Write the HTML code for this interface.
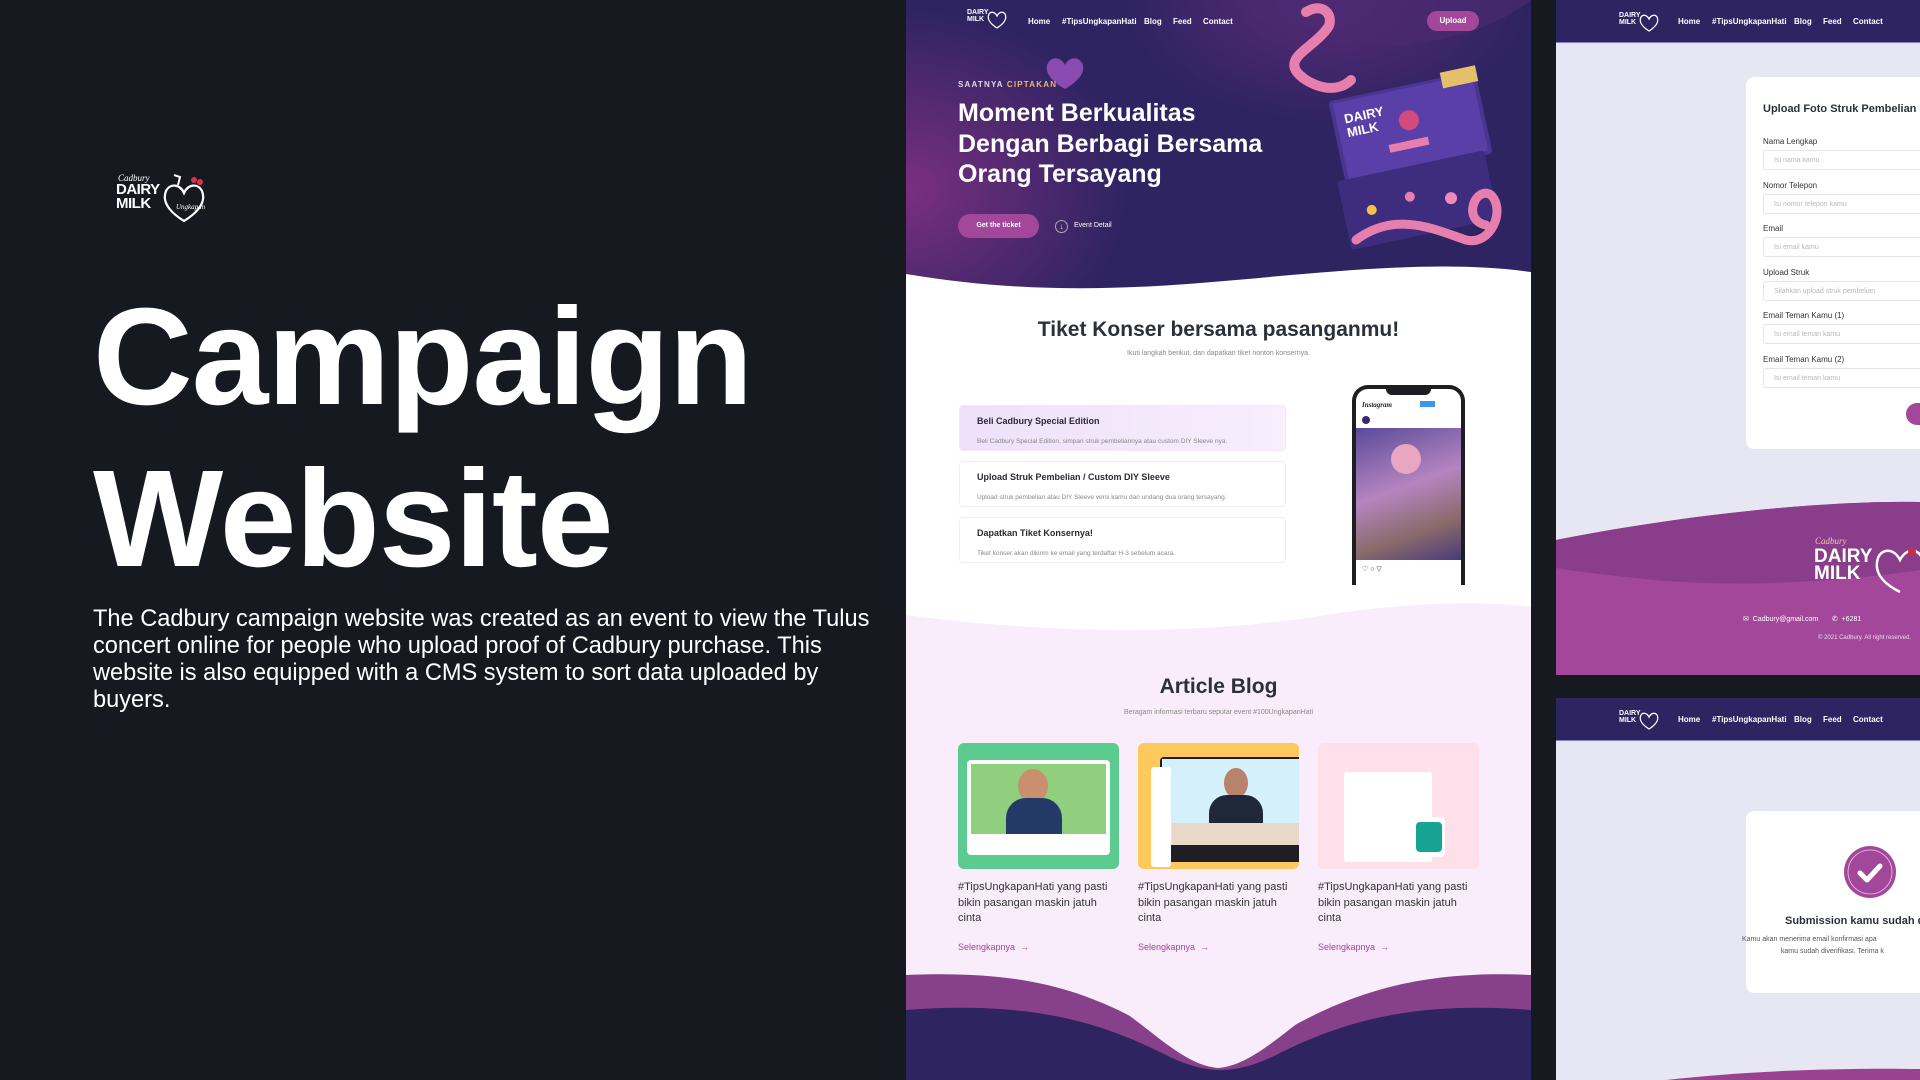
<!DOCTYPE html>
<html><head><meta charset="utf-8"><style>
*{margin:0;padding:0;box-sizing:border-box}
body{width:1920px;height:1080px;background:#161920;position:relative;overflow:hidden;font-family:"Liberation Sans",sans-serif}
.abs{position:absolute}
.nav a{position:absolute;color:#fff;font-size:8px;font-weight:bold;top:17px;white-space:nowrap}
.lbl{position:absolute;left:207px;font-size:8px;color:#333}
.inp{position:absolute;left:207px;width:200px;height:20px;border:1px solid #e4e4ea;border-radius:3px;font-size:7px;color:#b8b8c0;padding:6px 10px}
.step{position:absolute;left:53px;width:327px;height:46px;border:1px solid #eee;border-radius:4px;background:#fff;padding:10px 17px}
.step b{display:block;font-size:9px;color:#2a2a35;margin-bottom:4px}
.step span{font-size:6.5px;color:#888}
.card{position:absolute;top:743px;width:161px;height:126px;border-radius:6px;overflow:hidden}
.ct{position:absolute;top:880px;font-size:11px;line-height:15.5px;color:#333;width:165px}
.more{position:absolute;top:942px;font-size:9px;color:#a3479a}
</style></head><body>

<!-- LEFT -->
<div class="abs" style="left:116px;top:171px;width:92px;height:54px">
 <div class="abs" style="left:2px;top:2px;font:italic 9px 'Liberation Serif',serif;color:#fff">Cadbury</div>
 <div class="abs" style="left:0;top:12px;font:900 15px/14px 'Liberation Sans',sans-serif;color:#fff;letter-spacing:-0.5px">DAIRY<br>MILK</div>
 <svg class="abs" style="left:44px;top:0" width="48" height="54" viewBox="0 0 48 54"><path d="M24 50 C8 40 2 30 6 20 C10 12 20 13 24 22 C28 13 38 12 42 20 C46 30 40 40 24 50Z" fill="none" stroke="#fff" stroke-width="2.2"/><path d="M14 4 l6 2 -2 8" stroke="#fff" stroke-width="2" fill="none"/><circle cx="34" cy="9" r="3" fill="#e0304a"/><circle cx="40" cy="11" r="3" fill="#e0304a"/><text x="16" y="38" font-size="7" fill="#fff" font-style="italic" font-family="Liberation Serif">Ungkapan</text></svg>
</div>
<div class="abs" style="left:93px;top:276px;font-weight:bold;font-size:138px;line-height:162px;color:#fff;letter-spacing:-1px">Campaign<br>Website</div>
<div class="abs" style="left:93px;top:606px;font-size:23.6px;line-height:27px;color:#fff;width:900px">The Cadbury campaign website was created as an event to view the Tulus<br>concert online for people who upload proof of Cadbury purchase. This<br>website is also equipped with a CMS system to sort data uploaded by<br>buyers.</div>

<!-- MIDDLE -->
<div class="abs" style="left:906px;top:0;width:625px;height:1080px;background:#fff;overflow:hidden">
 <div class="abs" style="left:0;top:0;width:625px;height:300px;background:radial-gradient(ellipse 220px 180px at 0px 190px,#7a2f80 0%,rgba(122,47,128,0) 100%),radial-gradient(ellipse 200px 120px at 420px 0px,#5a2a77 0%,rgba(90,42,119,0) 100%),#2f2462"></div>
 <svg class="abs" style="left:0;top:250px" width="625" height="60"><path d="M0 24 C120 44 220 40 330 30 C440 20 540 10 625 22 L625 60 L0 60Z" fill="#fff"/></svg>
 <div class="abs" style="left:0;top:300px;width:625px;height:320px;background:#fff"></div>
 <!-- hero deco -->
 <svg class="abs" style="left:330px;top:0" width="295" height="270" viewBox="0 0 295 270">
  <path d="M0 0 C20 30 90 55 170 45 C230 38 270 20 295 0Z" fill="#4a2a70" opacity=".7"/>
  <path d="M70 12 C90 0 100 20 90 30 C75 50 40 60 70 80 C95 95 110 85 115 80" fill="none" stroke="#e77fae" stroke-width="10" stroke-linecap="round"/>
  <g transform="rotate(-12 175 130)"><rect x="100" y="85" width="150" height="85" rx="4" fill="#4b3593"/><rect x="104" y="88" width="142" height="78" fill="#5a3fa8"/><rect x="92" y="165" width="150" height="70" rx="3" fill="#3e2c7e"/>
  <text x="112" y="110" font-size="13" font-weight="900" fill="#fff" font-family="Liberation Sans">DAIRY</text><text x="112" y="124" font-size="13" font-weight="900" fill="#fff" font-family="Liberation Sans">MILK</text>
  <rect x="215" y="80" width="36" height="16" fill="#e4c06a"/><circle cx="175" cy="120" r="10" fill="#d54a7c"/><rect x="150" y="140" width="40" height="8" fill="#e77fae"/><circle cx="120" cy="200" r="5" fill="#f1c34a"/><circle cx="160" cy="195" r="5" fill="#e77fae"/><circle cx="200" cy="205" r="6" fill="#f08bb8"/></g>
  <path d="M120 240 C160 210 200 230 230 240 C255 246 270 210 255 195 C240 185 225 220 250 225" fill="none" stroke="#e77fae" stroke-width="9" stroke-linecap="round"/>
 </svg>
 <!-- nav -->
 <div class="abs" style="left:61px;top:9px;font:900 7px/7px 'Liberation Sans';color:#fff">DAIRY<br>MILK</div>
 <svg class="abs" style="left:80px;top:8px" width="22" height="22"><path d="M11 20 C3 15 1 10 3 6 C5 3 9 4 11 8 C13 4 17 3 19 6 C21 10 19 15 11 20Z" fill="none" stroke="#fff" stroke-width="1.3"/></svg>
 <div class="nav"><a style="left:122px">Home</a><a style="left:156px">#TipsUngkapanHati</a><a style="left:238px">Blog</a><a style="left:267px">Feed</a><a style="left:297px">Contact</a></div>
 <div class="abs" style="left:521px;top:11px;width:52px;height:20px;border-radius:10px;background:#a3479a;color:#fff;font-size:8px;font-weight:bold;text-align:center;line-height:20px">Upload</div>
 <svg class="abs" style="left:138px;top:55px" width="42" height="35"><path d="M21 34 C5 25 0 15 4 8 C9 0 18 3 21 10 C24 3 33 0 38 8 C42 15 37 25 21 34Z" fill="#8a4bb0"/></svg>
 <div class="abs" style="left:52px;top:80px;font-size:8px;letter-spacing:1.2px;color:#ddd;font-weight:bold">SAATNYA <span style="color:#e8b96a">CIPTAKAN</span></div>
 <div class="abs" style="left:52px;top:98px;font-size:25px;line-height:30.5px;font-weight:bold;color:#fff">Moment Berkualitas<br>Dengan Berbagi Bersama<br>Orang Tersayang</div>
 <div class="abs" style="left:52px;top:214px;width:81px;height:24px;border-radius:12px;background:#a3479a;color:#fff;font-size:7px;text-align:center;line-height:24px;font-weight:bold">Get the ticket</div>
 <div class="abs" style="left:149px;top:220px;width:13px;height:13px;border:1px solid #aaa;border-radius:50%;color:#ddd;font-size:8px;text-align:center;line-height:11px">↓</div>
 <div class="abs" style="left:168px;top:222px;font-size:7px;color:#fff">Event Detail</div>
 <!-- tiket -->
 <div class="abs" style="left:0;top:318px;width:625px;text-align:center;font-size:21px;font-weight:bold;color:#2b303b">Tiket Konser bersama pasanganmu!</div>
 <div class="abs" style="left:0;top:350px;width:625px;text-align:center;font-size:7px;color:#888">Ikuti langkah berikut, dan dapatkan tiket nonton konsernya.</div>
 <div class="step" style="top:405px;background:linear-gradient(90deg,#efe0fa,#f8eefc);border-color:#f3e6fb"><b>Beli Cadbury Special Edition</b><span>Beli Cadbury Special Edition, simpan struk pembeliannya atau custom DIY Sleeve nya.</span></div>
 <div class="step" style="top:461px"><b>Upload Struk Pembelian / Custom DIY Sleeve</b><span>Upload struk pembelian atau DIY Sleeve versi kamu dan undang dua orang tersayang.</span></div>
 <div class="step" style="top:517px"><b>Dapatkan Tiket Konsernya!</b><span>Tiket konser akan dikirim ke email yang terdaftar H-3 sebelum acara.</span></div>
 <div class="abs" style="left:446px;top:385px;width:113px;height:200px;border:4px solid #1d1d22;border-bottom:none;border-radius:16px 16px 0 0;background:#fff;overflow:hidden">
  <div class="abs" style="left:30px;top:-2px;width:45px;height:8px;background:#1d1d22;border-radius:0 0 6px 6px"></div>
  <div class="abs" style="left:6px;top:12px;font:italic bold 7px 'Liberation Serif';color:#222">Instagram</div>
  <div class="abs" style="left:64px;top:12px;width:15px;height:6px;background:#3897f0"></div>
  <div class="abs" style="left:6px;top:27px;width:8px;height:8px;border-radius:50%;background:#3b2a6b"></div>
  <div class="abs" style="left:0;top:39px;width:105px;height:132px;background:linear-gradient(160deg,#5a4a9a,#b585c0 45%,#8a6a6a 75%,#4a3a7a)"></div>
  <div class="abs" style="left:35px;top:55px;width:30px;height:30px;border-radius:50%;background:#e9a6c0"></div>
  <div class="abs" style="left:6px;top:176px;font-size:7px;color:#333">♡ ○ ▽</div>
 </div>
 <!-- blog -->
 <svg class="abs" style="left:0;top:595px" width="625" height="40"><path d="M0 20 C150 40 300 40 420 20 C500 8 570 5 625 12 L625 40 L0 40Z" fill="#f9ecfb"/></svg>
 <div class="abs" style="left:0;top:634px;width:625px;height:446px;background:#f9ecfb"></div>
 <div class="abs" style="left:0;top:675px;width:625px;text-align:center;font-size:21px;font-weight:bold;color:#2b303b">Article Blog</div>
 <div class="abs" style="left:0;top:709px;width:625px;text-align:center;font-size:7px;color:#888">Beragam informasi terbaru seputar event #100UngkapanHati</div>
 <div class="card" style="left:52px;background:#5ccb8f"><div class="abs" style="left:9px;top:17px;width:143px;height:95px;background:#fff;border-radius:4px"></div><div class="abs" style="left:13px;top:21px;width:135px;height:70px;background:#8fcf7e"></div><div class="abs" style="left:60px;top:26px;width:30px;height:34px;border-radius:50%;background:#c98f6e"></div><div class="abs" style="left:48px;top:55px;width:56px;height:36px;border-radius:20px 20px 0 0;background:#243a66"></div></div>
 <div class="card" style="left:232px;background:#fdc85c"><div class="abs" style="left:22px;top:14px;width:145px;height:105px;background:#1e1e24;border-radius:4px"></div><div class="abs" style="left:24px;top:16px;width:139px;height:86px;background:#d4f0fb"></div><div class="abs" style="left:13px;top:24px;width:20px;height:100px;background:#fff;border-radius:3px"></div><div class="abs" style="left:86px;top:25px;width:24px;height:30px;border-radius:50%;background:#b7836a"></div><div class="abs" style="left:71px;top:52px;width:54px;height:50px;border-radius:18px 18px 0 0;background:#1f2838"></div><div class="abs" style="left:34px;top:80px;width:129px;height:22px;background:#e8d8c8"></div></div>
 <div class="card" style="left:412px;background:#fde0ea"><div class="abs" style="left:26px;top:29px;width:88px;height:90px;background:#fff;border-radius:3px"></div><div class="abs" style="left:93px;top:74px;width:34px;height:40px;background:#fff;border-radius:4px"></div><div class="abs" style="left:98px;top:79px;width:26px;height:30px;background:#16a393;border-radius:4px"></div></div>
 <div class="ct" style="left:52px">#TipsUngkapanHati yang pasti bikin pasangan maskin jatuh cinta</div>
 <div class="ct" style="left:232px">#TipsUngkapanHati yang pasti bikin pasangan maskin jatuh cinta</div>
 <div class="ct" style="left:412px">#TipsUngkapanHati yang pasti bikin pasangan maskin jatuh cinta</div>
 <div class="more" style="left:52px">Selengkapnya &nbsp;→</div>
 <div class="more" style="left:232px">Selengkapnya &nbsp;→</div>
 <div class="more" style="left:412px">Selengkapnya &nbsp;→</div>
 <svg class="abs" style="left:0;top:970px" width="625" height="110" viewBox="0 0 625 110"><path d="M0 5 C120 0 180 20 250 60 C300 90 330 90 380 60 C450 20 520 0 625 5 L625 110 L0 110Z" fill="#87418a"/><path d="M0 40 C130 30 200 55 260 85 C300 105 330 105 370 85 C430 55 500 30 625 40 L625 110 L0 110Z" fill="#2e2460"/><path d="M180 20 C230 40 270 95 312 98 C355 95 395 40 445 20 Z" fill="#f9ecfb"/></svg>
</div>

<!-- RIGHT TOP -->
<div class="abs" style="left:1556px;top:0;width:364px;height:675px;background:#e7e7f3;overflow:hidden">
 <div class="abs" style="left:0;top:0;width:364px;height:43px;background:#2f2462;border-bottom:1px solid #8a7fc0"></div>
 <div class="abs" style="left:63px;top:12px;font:900 7px/7px 'Liberation Sans';color:#fff">DAIRY<br>MILK</div>
 <svg class="abs" style="left:82px;top:11px" width="22" height="22"><path d="M11 20 C3 15 1 10 3 6 C5 3 9 4 11 8 C13 4 17 3 19 6 C21 10 19 15 11 20Z" fill="none" stroke="#fff" stroke-width="1.3"/></svg>
 <div class="nav"><a style="left:122px">Home</a><a style="left:156px">#TipsUngkapanHati</a><a style="left:238px">Blog</a><a style="left:267px">Feed</a><a style="left:297px">Contact</a></div>
 <div class="abs" style="left:190px;top:77px;width:220px;height:372px;background:#fff;border-radius:8px"></div>
 <div class="abs" style="left:207px;top:103px;font-size:11px;font-weight:bold;color:#2b303b;white-space:nowrap">Upload Foto Struk Pembelian</div>
 <div class="lbl" style="top:137px">Nama Lengkap</div><div class="inp" style="top:150px">Isi nama kamu</div>
 <div class="lbl" style="top:181px">Nomor Telepon</div><div class="inp" style="top:194px">Isi nomor telepon kamu</div>
 <div class="lbl" style="top:224px">Email</div><div class="inp" style="top:237px">Isi email kamu</div>
 <div class="lbl" style="top:268px">Upload Struk</div><div class="inp" style="top:281px">Silahkan upload struk pembelian</div>
 <div class="lbl" style="top:311px">Email Teman Kamu (1)</div><div class="inp" style="top:324px">Isi email teman kamu</div>
 <div class="lbl" style="top:355px">Email Teman Kamu (2)</div><div class="inp" style="top:368px">Isi email teman kamu</div>
 <div class="abs" style="left:350px;top:403px;width:40px;height:22px;border-radius:11px;background:#a3479a"></div>
 <svg class="abs" style="left:0;top:490px" width="364" height="185" viewBox="0 0 364 185"><path d="M0 50 C100 30 250 10 364 12 L364 185 L0 185Z" fill="#a3479a"/><path d="M0 50 C100 30 250 10 364 12 L364 80 C300 90 180 100 80 88 C40 84 10 80 0 78Z" fill="#8a3d8a"/></svg>
 <div class="abs" style="left:259px;top:536px;font:italic 9px 'Liberation Serif';color:#f4c9a8">Cadbury</div>
 <div class="abs" style="left:258px;top:548px;font:900 19px/17px 'Liberation Sans';color:#fff">DAIRY<br>MILK</div>
 <svg class="abs" style="left:316px;top:530px" width="48" height="66"><path d="M28 62 C8 52 2 40 6 28 C10 18 22 18 28 30 C34 18 46 18 50 28" fill="none" stroke="#fff" stroke-width="2.5"/><circle cx="40" cy="22" r="4" fill="#c8303e"/></svg>
 <div class="abs" style="left:187px;top:615px;font-size:7px;color:#fff;white-space:nowrap">✉ &nbsp;Cadbury@gmail.com &nbsp; &nbsp; &nbsp; ✆ &nbsp;+6281</div>
 <div class="abs" style="left:262px;top:635px;font-size:6px;color:#f0d8ee;white-space:nowrap">© 2021 Cadbury. All right reserved.</div>
</div>

<!-- RIGHT BOTTOM -->
<div class="abs" style="left:1556px;top:698px;width:364px;height:382px;background:#e7e7f3;overflow:hidden">
 <div class="abs" style="left:0;top:0;width:364px;height:43px;background:#2f2462;border-bottom:1px solid #8a7fc0"></div>
 <div class="abs" style="left:63px;top:12px;font:900 7px/7px 'Liberation Sans';color:#fff">DAIRY<br>MILK</div>
 <svg class="abs" style="left:82px;top:11px" width="22" height="22"><path d="M11 20 C3 15 1 10 3 6 C5 3 9 4 11 8 C13 4 17 3 19 6 C21 10 19 15 11 20Z" fill="none" stroke="#fff" stroke-width="1.3"/></svg>
 <div class="nav"><a style="left:122px">Home</a><a style="left:156px">#TipsUngkapanHati</a><a style="left:238px">Blog</a><a style="left:267px">Feed</a><a style="left:297px">Contact</a></div>
 <div class="abs" style="left:190px;top:113px;width:220px;height:182px;background:#fff;border-radius:8px"></div>
 <svg class="abs" style="left:288px;top:148px" width="52" height="52"><circle cx="26" cy="26" r="26" fill="#a3479a"/><circle cx="26" cy="26" r="22" fill="none" stroke="#e6c2e2" stroke-width="0.8"/><path d="M16 27 L23 34 L36 20" fill="none" stroke="#fff" stroke-width="5" stroke-linecap="round" stroke-linejoin="round"/></svg>
 <div class="abs" style="left:229px;top:217px;font-size:11px;font-weight:bold;color:#2b303b;white-space:nowrap">Submission kamu sudah di</div>
 <div class="abs" style="left:186px;top:236px;font-size:7px;line-height:12px;color:#555;white-space:nowrap">Kamu akan menerima email konfirmasi apa<br>&nbsp; &nbsp; &nbsp; &nbsp; &nbsp; &nbsp; &nbsp; &nbsp; &nbsp; &nbsp; kamu sudah diverifikasi. Terima k</div>
 <svg class="abs" style="left:0;top:360px" width="364" height="22"><path d="M110 22 C200 12 290 10 364 11 L364 22Z" fill="#9a4292"/></svg>
</div>
</body></html>
